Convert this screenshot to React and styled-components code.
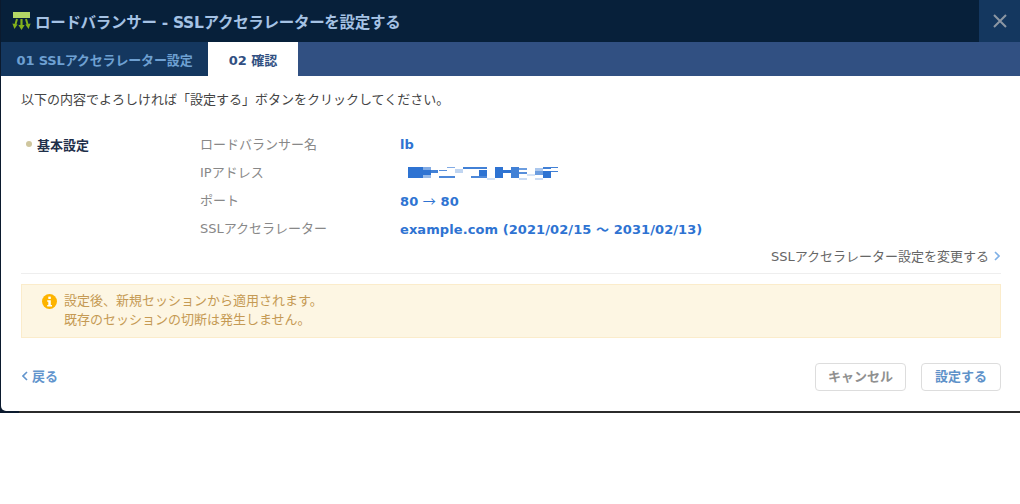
import { createGlobalStyle, styled } from 'styled-components';

const GlobalStyle = createGlobalStyle`
  html, body { margin: 0; padding: 0; background: #fff; }
  body { font-family: "DejaVu Sans", "Noto Sans CJK JP", sans-serif; }
  * { box-sizing: border-box; }
`;

const Backdrop = styled.div`
  width: 1020px;
  height: 413px;
  background: linear-gradient(to right, #0b1a2e 19px, #2b2b2b 19px);
  padding: 0 0 2px 1px;
`;

const Dialog = styled.div`
  height: 411px;
  background: #fff;
  border-radius: 0 0 0 5px;
  overflow: hidden;
  display: flex;
  flex-direction: column;
`;

const Header = styled.header`
  height: 42px;
  flex: none;
  background: #07203a;
  display: flex;
  align-items: center;
  padding-left: 11px;
`;

const Title = styled.h1`
  margin: 0 0 0 4px;
  flex: 1;
  font-size: 15.5px;
  font-weight: 700;
  letter-spacing: -0.3px;
  color: #a5c2e4;
`;

const CloseButton = styled.div`
  width: 41px;
  height: 42px;
  background: #14375f;
  display: flex;
  align-items: center;
  justify-content: center;
`;

const Tabs = styled.nav`
  height: 34px;
  flex: none;
  display: flex;
  background: #315082;
`;

const Tab = styled.div`
  width: ${p => (p.$active ? '90px' : '207px')};
  display: flex;
  align-items: center;
  justify-content: center;
  font-size: 13px;
  font-weight: 700;
  letter-spacing: ${p => (p.$active ? '0' : '-0.15px')};
  background: ${p => (p.$active ? '#fff' : '#14375f')};
  color: ${p => (p.$active ? '#315082' : '#6ea0d2')};
`;

const Content = styled.main`
  flex: 1;
  display: flex;
  flex-direction: column;
  padding: 14px 19px 20px 20px;
`;

const Lead = styled.p`
  margin: 0;
  font-size: 13px;
  line-height: 20px;
  color: #444;
`;

const Section = styled.section`
  margin-top: 20px;
  display: flex;
`;

const SectionLabel = styled.div`
  width: 179px;
  height: 28px;
  display: flex;
  align-items: center;
  gap: 5px;
  padding-left: 5px;
  font-size: 13px;
  font-weight: 700;
  color: #1f2f4a;
  &::before {
    content: '';
    width: 6px;
    height: 6px;
    border-radius: 50%;
    background: #cfc69e;
  }
`;

const Rows = styled.dl`
  margin: 0;
  flex: 1;
`;

const Row = styled.div`
  height: 28px;
  display: flex;
  align-items: center;
`;

const Key = styled.dt`
  width: 200px;
  padding-bottom: 2px;
  font-size: 13px;
  color: #888;
`;

const Value = styled.dd`
  margin: 0;
  font-size: 13px;
  font-weight: 700;
  color: #2e73d2;
  letter-spacing: 0.08px;
`;

const Arrow = styled.span`
  font-family: "Noto Sans CJK JP", sans-serif;
  font-weight: 400;
`;

const ChangeLink = styled.div`
  height: 19px;
  margin-top: 4px;
  padding-right: 1px;
  display: flex;
  justify-content: flex-end;
  align-items: center;
  gap: 5px;
  font-size: 13px;
  color: #666;
`;

const Divider = styled.hr`
  width: 100%;
  margin: 8px 0 10px;
  border: 0;
  border-top: 1px solid #eeeeee;
`;

const Notice = styled.div`
  height: 54px;
  display: flex;
  align-items: flex-start;
  gap: 7px;
  padding: 6px 20px;
  background: #fdf6e3;
  border: 1px solid #fbeccb;
  font-size: 13px;
  line-height: 19px;
  color: #c59a54;
`;

const InfoSvg = styled.svg`
  flex: none;
  margin-top: 3px;
`;

const Footer = styled.footer`
  margin-top: auto;
  display: flex;
  align-items: center;
  justify-content: space-between;
`;

const BackLink = styled.div`
  display: flex;
  align-items: center;
  gap: 4px;
  padding: 0 0 3px 1px;
  font-size: 13px;
  font-weight: 700;
  color: #6295cd;
`;

const Buttons = styled.div`
  display: flex;
  gap: 15px;
`;

const Button = styled.button`
  width: ${p => p.$width}px;
  height: 28px;
  padding: 0 0 3px;
  background: #fff;
  border: 1px solid #dddddd;
  border-radius: 4px;
  font: inherit;
  font-size: 13px;
  font-weight: 700;
  color: ${p => p.$color};
`;

const MaskSvg = styled.svg`
  display: block;
  margin: 2px 0 0 8px;
`;

const LogoIcon = () => (
  <svg width="19" height="20" viewBox="0 0 19 20">
    <rect x="1" y="1" width="17" height="6" fill="#b4d866" />
    <path d="M9.5 8 V15" stroke="#84b21c" strokeWidth="2.2" />
    <path d="M6.4 14 L9.5 19 L12.6 14 Z" fill="#84b21c" />
    <path d="M5 8 L3.4 13.5" stroke="#84b21c" strokeWidth="2" />
    <path d="M0.4 12.6 L2.4 18 L5.6 13.6 Z" fill="#84b21c" />
    <path d="M14 8 L15.6 13.5" stroke="#84b21c" strokeWidth="2" />
    <path d="M18.6 12.6 L16.6 18 L13.4 13.6 Z" fill="#84b21c" />
  </svg>
);

const CloseIcon = () => (
  <svg width="14" height="14" viewBox="0 0 14 14">
    <path d="M1 1 L13 13 M13 1 L1 13" stroke="#8c96a3" strokeWidth="2" />
  </svg>
);

const Chevron = ({ left, color }) => (
  <svg width="6" height="10" viewBox="0 0 6 10">
    <path d={left ? 'M5 1 L1 5 L5 9' : 'M1 1 L5 5 L1 9'} stroke={color} strokeWidth="1.6" fill="none" />
  </svg>
);

const InfoIcon = () => (
  <InfoSvg width="15" height="15" viewBox="0 0 15 15">
    <circle cx="7.5" cy="7.5" r="7.5" fill="#fdb400" />
    <rect x="6.3" y="2.6" width="2.5" height="2.4" fill="#fff" />
    <path d="M5.2 6.2 H8.8 V10.9 H10 V12.4 H5.2 V10.9 H6.3 V7.7 H5.2 Z" fill="#fff" />
  </InfoSvg>
);

// redacted IP address, mosaic blocks
const blocks = [
  [0, 0, 15, 11, 1], [15, 0, 8, 3, 0.6], [15, 3, 8, 5, 1], [23, 3, 7, 3, 0.9], [15, 8, 8, 3, 0.5],
  [31, 3, 8, 1, 0.8], [39, 0, 8, 1, 0.6], [31, 9, 16, 2, 0.85], [47, 2, 8, 4, 0.3], [55, 0, 24, 2, 0.9],
  [63, 9, 16, 2, 0.85], [71, 3, 8, 6, 1], [79, 11, 8, 2, 0.2], [87, 0, 8, 11, 1],
  [95, 3, 8, 3, 1], [103, 0, 8, 11, 0.9], [111, 1, 8, 2, 0.7], [111, 5, 8, 2, 0.8], [111, 11, 8, 2, 0.25],
  [119, 7, 8, 2, 0.2], [127, 1, 8, 3, 0.4], [135, 0, 8, 2, 0.9], [127, 4, 8, 4, 0.7], [135, 4, 8, 7, 1],
  [143, 0, 8, 1, 0.9], [143, 4, 8, 1, 0.9], [127, 11, 8, 2, 0.25],
];

const MaskedIp = () => (
  <MaskSvg width="150" height="13" viewBox="0 0 150 13">
    {blocks.map(([x, y, w, h, o], i) => (
      <rect key={i} x={x} y={y} width={w} height={h} fill="#2e73d2" opacity={o} />
    ))}
  </MaskSvg>
);

export default function App() {
  return (
    <>
      <GlobalStyle />
      <Backdrop>
        <Dialog>
          <Header>
            <LogoIcon />
            <Title>ロードバランサー - SSLアクセラレーターを設定する</Title>
            <CloseButton><CloseIcon /></CloseButton>
          </Header>
          <Tabs>
            <Tab>01 SSLアクセラレーター設定</Tab>
            <Tab $active>02 確認</Tab>
          </Tabs>
          <Content>
            <Lead>以下の内容でよろしければ「設定する」ボタンをクリックしてください。</Lead>
            <Section>
              <SectionLabel>基本設定</SectionLabel>
              <Rows>
                <Row><Key>ロードバランサー名</Key><Value>lb</Value></Row>
                <Row><Key>IPアドレス</Key><Value><MaskedIp /></Value></Row>
                <Row><Key>ポート</Key><Value>80 <Arrow>→</Arrow> 80</Value></Row>
                <Row><Key>SSLアクセラレーター</Key><Value>example.com (2021/02/15 ～ 2031/02/13)</Value></Row>
              </Rows>
            </Section>
            <ChangeLink>SSLアクセラレーター設定を変更する <Chevron color="#7fb0e6" /></ChangeLink>
            <Divider />
            <Notice>
              <InfoIcon />
              <div>設定後、新規セッションから適用されます。<br />既存のセッションの切断は発生しません。</div>
            </Notice>
            <Footer>
              <BackLink><Chevron left color="#6295cd" />戻る</BackLink>
              <Buttons>
                <Button $width={91} $color="#909090">キャンセル</Button>
                <Button $width={80} $color="#5f92c9">設定する</Button>
              </Buttons>
            </Footer>
          </Content>
        </Dialog>
      </Backdrop>
    </>
  );
}
